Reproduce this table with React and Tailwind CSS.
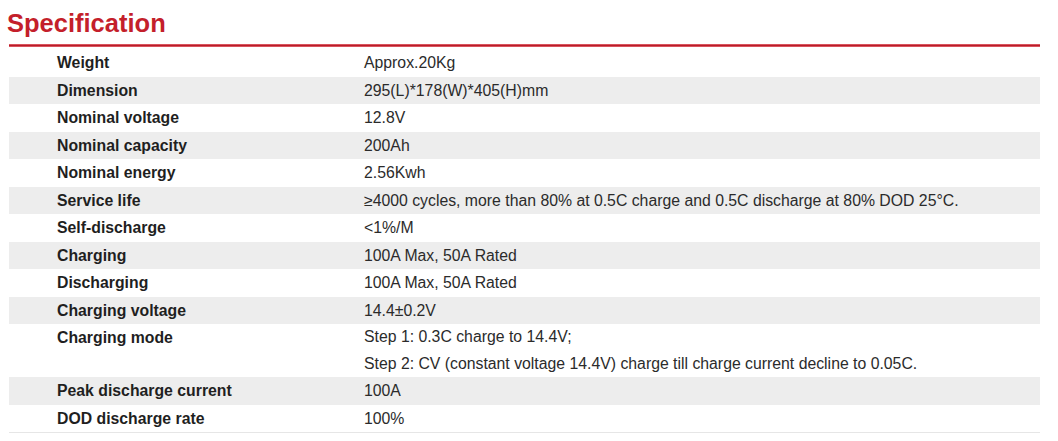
const specs = [
  { label: "Weight", value: ["Approx.20Kg"] },
  { label: "Dimension", value: ["295(L)*178(W)*405(H)mm"], shade: true },
  { label: "Nominal voltage", value: ["12.8V"] },
  { label: "Nominal capacity", value: ["200Ah"], shade: true },
  { label: "Nominal energy", value: ["2.56Kwh"] },
  {
    label: "Service life",
    value: ["≥4000 cycles, more than 80% at 0.5C charge and 0.5C discharge at 80% DOD 25°C."],
    shade: true,
  },
  { label: "Self-discharge", value: ["<1%/M"] },
  { label: "Charging", value: ["100A Max, 50A Rated"], shade: true },
  { label: "Discharging", value: ["100A Max, 50A Rated"] },
  { label: "Charging voltage", value: ["14.4±0.2V"], shade: true },
  {
    label: "Charging mode",
    value: [
      "Step 1: 0.3C charge to 14.4V;",
      "Step 2: CV (constant voltage 14.4V) charge till charge current decline to 0.05C.",
    ],
  },
  { label: "Peak discharge current", value: ["100A"], shade: true },
  { label: "DOD discharge rate", value: ["100%"] },
];

export default function App() {
  return (
    <div className="w-[1058px] h-[441px] bg-white font-['Liberation_Sans',Arial,sans-serif] overflow-hidden">
      {/* Title */}
      <div className="pl-[7px] pt-[8px] pr-[18px]">
        <h2 className="text-[25.5px] leading-[30px] font-bold text-[#c41f2b]">Specification</h2>
        <div className="mt-[6px] ml-[2px] h-[3px] bg-[#b81d29] border-y border-[#d9535d]" />
      </div>

      {/* Table */}
      <div className="mt-[2px] ml-[9px] w-[1031px] border-b border-[#e6e6e6]">
        {specs.map((row) => (
          <div
            key={row.label}
            className={`flex text-[15.8px] ${row.shade ? "bg-[#ededed]" : "bg-white"}`}
          >
            <div className="w-[355px] pl-[48px] font-bold text-[#1f1f1f] leading-[27.5px]">
              {row.label}
            </div>
            <div className="flex-1 text-[#2b2b2b]">
              {row.value.map((line, i) => (
                <div key={i} className={row.value.length > 1 ? "leading-[26.5px]" : "leading-[27.5px]"}>
                  {line}
                </div>
              ))}
            </div>
          </div>
        ))}
      </div>
    </div>
  );
}
